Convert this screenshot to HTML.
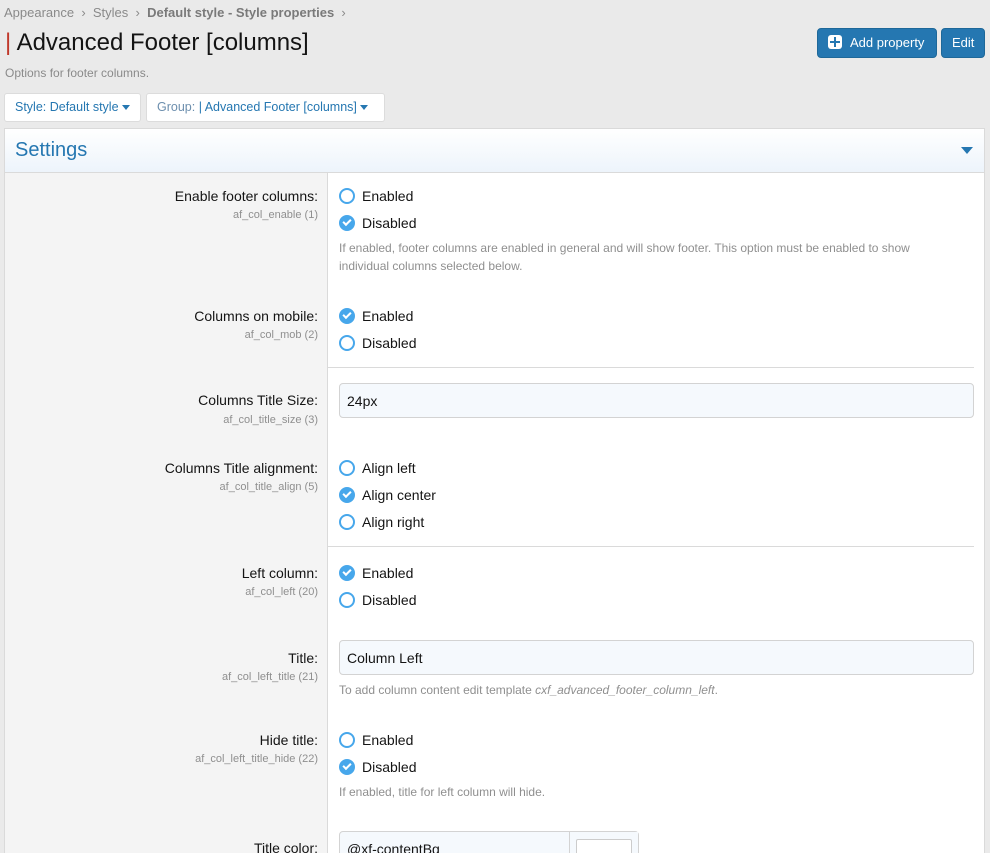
<!DOCTYPE html>
<html style="overflow:hidden;height:853px"><head><meta charset="utf-8"><style>
*{box-sizing:border-box;margin:0;padding:0}
body{width:990px;height:853px;overflow:hidden;background:#eaeaea;font-family:"Liberation Sans",sans-serif;color:#141414;position:relative}
.a{position:absolute;white-space:nowrap}
.crumb{left:4px;top:5px;font-size:13px;color:#8a8a8a}
.crumb b{color:#7a7a7a}
h1{position:absolute;left:5px;top:29px;font-size:24px;font-weight:normal;color:#141414}
h1 span{color:#c0392b}
.desc{left:5px;top:66px;font-size:12px;color:#8a8a8a}
.btn{position:absolute;top:28px;height:30px;background:#2577b1;color:#fff;border-radius:4px;font-size:13px;line-height:28px;padding:0 10px;border:1px solid #1e6899;white-space:nowrap}
.fb{position:absolute;top:93px;height:29px;background:#fff;border:1px solid #dcdcdc;border-radius:3px;font-size:12.5px;color:#2577b1;line-height:27px;padding:0 10px;white-space:nowrap}
.fb .g{color:#6d8fae}
.car{display:inline-block;width:0;height:0;border-left:4px solid transparent;border-right:4px solid transparent;border-top:5px solid #2577b1;vertical-align:middle;margin-left:3px}
.panel{position:absolute;left:4px;top:128px;width:981px;height:780px;border:1px solid #dadada;background:#fff}
.ph{position:absolute;left:0;top:0;width:100%;height:44px;background:linear-gradient(#fff,#edf4fb);border-bottom:1px solid #dadada}
.ph .t{position:absolute;left:10px;top:10px;font-size:20px;color:#2577b1}
.ph .c{position:absolute;right:11px;top:18px;border-left:6px solid transparent;border-right:6px solid transparent;border-top:7px solid #2577b1}
.left{position:absolute;left:0;top:44px;width:323px;height:740px;background:#f4f4f4;border-right:1px solid #dadada}
.lab{position:absolute;right:672px;font-size:14px;text-align:right;white-space:nowrap}
.sub{position:absolute;right:672px;font-size:11px;color:#8f8f8f;white-space:nowrap}
.r{position:absolute;left:339px;font-size:14px;white-space:nowrap;padding-left:23px;line-height:16px}
.r:before{content:"";position:absolute;left:0;top:0;width:12px;height:12px;border:2px solid #47a7eb;border-radius:50%}
.r.on:before{background:#47a7eb}
.r.on:after{content:"";position:absolute;left:4px;top:4px;width:6px;height:3px;border-left:2px solid #fff;border-bottom:2px solid #fff;transform:rotate(-45deg)}
.hint{position:absolute;left:339px;font-size:12px;color:#8f8f8f;line-height:18px}
.inp{position:absolute;left:339px;width:635px;height:35px;background:#f5f9fd;border:1px solid #d3d3d3;border-radius:4px;font-size:14px;padding:9px 7px}
.sep{position:absolute;left:327px;width:647px;height:1px;background:#dadada}
</style></head><body>
<div class="a crumb">Appearance &nbsp;›&nbsp; Styles &nbsp;›&nbsp; <b>Default style - Style properties</b> &nbsp;›</div>
<h1><span>|</span> Advanced Footer [columns]</h1>
<div class="a desc">Options for footer columns.</div>
<div class="btn" style="left:817px;width:120px"><span style="display:inline-block;width:14px;height:14px;background:#fff;border-radius:3px;vertical-align:-2px;margin-right:8px;position:relative"><span style="position:absolute;left:6px;top:2px;width:2px;height:10px;background:#2577b1"></span><span style="position:absolute;left:2px;top:6px;width:10px;height:2px;background:#2577b1"></span></span>Add property</div>
<div class="btn" style="left:941px;width:44px">Edit</div>
<div class="fb" style="left:4px;width:137px">Style: Default style<span class="car"></span></div>
<div class="fb" style="left:146px;width:239px"><span class="g">Group:</span> | Advanced Footer [columns]<span class="car"></span></div>
<div class="panel"><div class="ph"><div class="t">Settings</div><div class="c"></div></div><div class="left"></div></div>

<div class="lab" style="top:188px">Enable footer columns:</div><div class="sub" style="top:209px">af_col_enable (1)</div>
<div class="r" style="top:188px">Enabled</div><div class="r on" style="top:215px">Disabled</div>
<div class="hint" style="top:239px">If enabled, footer columns are enabled in general and will show footer. This option must be enabled to show<br>individual columns selected below.</div>

<div class="lab" style="top:308px">Columns on mobile:</div><div class="sub" style="top:329px">af_col_mob (2)</div>
<div class="r on" style="top:308px">Enabled</div><div class="r" style="top:335px">Disabled</div>
<div class="sep" style="top:367px"></div>

<div class="lab" style="top:392px">Columns Title Size:</div><div class="sub" style="top:414px">af_col_title_size (3)</div>
<div class="inp" style="top:383px">24px</div>

<div class="lab" style="top:460px">Columns Title alignment:</div><div class="sub" style="top:481px">af_col_title_align (5)</div>
<div class="r" style="top:460px">Align left</div><div class="r on" style="top:487px">Align center</div><div class="r" style="top:514px">Align right</div>
<div class="sep" style="top:546px"></div>

<div class="lab" style="top:565px">Left column:</div><div class="sub" style="top:586px">af_col_left (20)</div>
<div class="r on" style="top:565px">Enabled</div><div class="r" style="top:592px">Disabled</div>

<div class="lab" style="top:650px">Title:</div><div class="sub" style="top:671px">af_col_left_title (21)</div>
<div class="inp" style="top:640px">Column Left</div>
<div class="hint" style="top:681px">To add column content edit template <i>cxf_advanced_footer_column_left</i>.</div>

<div class="lab" style="top:732px">Hide title:</div><div class="sub" style="top:753px">af_col_left_title_hide (22)</div>
<div class="r" style="top:732px">Enabled</div><div class="r on" style="top:759px">Disabled</div>
<div class="hint" style="top:783px">If enabled, title for left column will hide.</div>

<div class="lab" style="top:840px">Title color:</div>
<div class="inp" style="top:831px;width:300px">@xf-contentBg</div>
<div style="position:absolute;left:569px;top:832px;width:69px;height:30px;border-left:1px solid #d3d3d3;background:#f5f9fd"></div>
<div style="position:absolute;left:576px;top:839px;width:56px;height:20px;border:1px solid #ccc;background:#fff;border-radius:2px"></div>
</body></html>
